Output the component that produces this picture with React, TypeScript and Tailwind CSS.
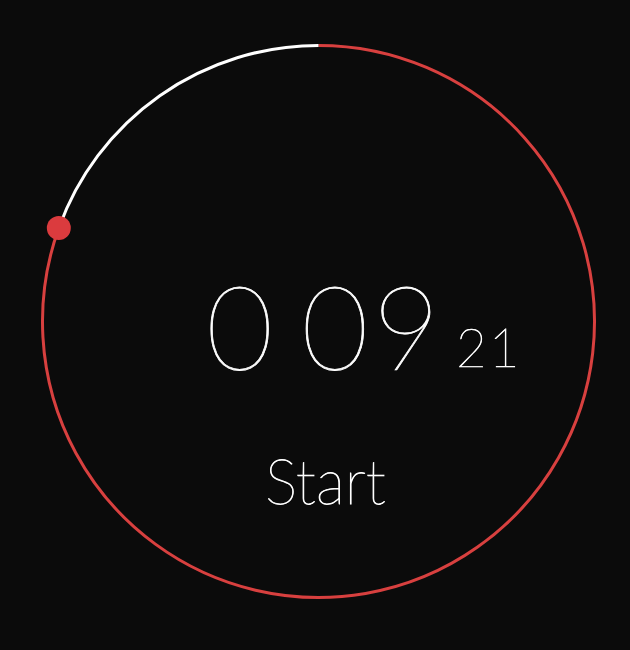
import React from "react";

const CX = 318.5;
const CY = 321.5;
const R = 276;

function polar(angleDeg: number) {
  // angle measured from top, clockwise
  const a = ((angleDeg - 90) * Math.PI) / 180;
  return { x: CX + R * Math.cos(a), y: CY + R * Math.sin(a) };
}

function Dial({ progress }: { progress: number }) {
  const end = polar(360 - progress * 360);
  const top = polar(0);
  const large = progress > 0.5 ? 1 : 0;
  const whiteArc = `M ${top.x} ${top.y} A ${R} ${R} 0 ${large} 0 ${end.x} ${end.y}`;
  const redArc = `M ${top.x} ${top.y} A ${R} ${R} 0 ${large ? 0 : 1} 1 ${end.x} ${end.y}`;

  return (
    <svg width={630} height={650} viewBox="0 0 630 650" className="col-start-1 row-start-1">
      <path d={redArc} fill="none" stroke="#d8403f" strokeWidth={3} />
      <path d={whiteArc} fill="none" stroke="#ffffff" strokeWidth={3} />
      <circle cx={end.x} cy={end.y} r={12} fill="#db3b3e" />
    </svg>
  );
}

export default function App() {
  return (
    <div className="w-[630px] h-[650px] bg-[#0b0b0b] grid text-white antialiased font-['Lato',_'Open_Sans',_sans-serif]">
      <Dial progress={70.2 / 360} />

      <div className="col-start-1 row-start-1 flex flex-col items-center pt-[251px]">
        <div className="relative flex items-baseline gap-[24px] pl-[20px] [-webkit-text-stroke:0.8px_white]">
          <span className="text-[116px] leading-[150px] font-thin tracking-[4px]">0</span>
          <span className="text-[116px] leading-[150px] font-thin tracking-[4px]">09</span>
          <span className="absolute left-full bottom-[28px] ml-[12px] text-[53px] leading-none font-thin tracking-[2px] will-change-transform [-webkit-text-stroke:0.7px_white]">
            21
          </span>
        </div>
        <button className="mt-[49px] text-[61px] leading-none font-thin text-white pl-[20px] will-change-transform [-webkit-text-stroke:0.8px_white]">
          Start
        </button>
      </div>
    </div>
  );
}
